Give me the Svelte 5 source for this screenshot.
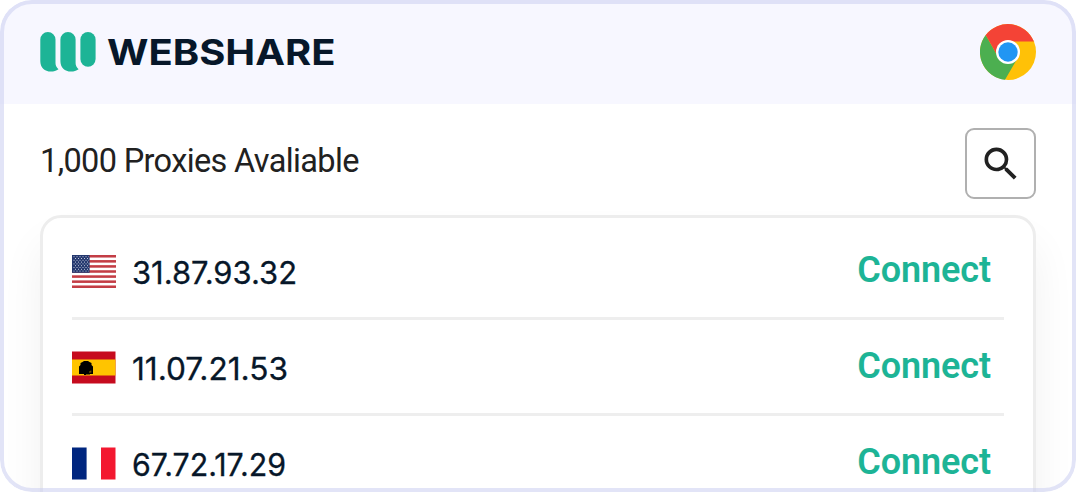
<script lang="ts">
	interface Proxy {
		country: 'us' | 'es' | 'fr';
		ip: string;
		width: number;
	}

	const proxies: Proxy[] = [
		{ country: 'us', ip: '31.87.93.32', width: 165 },
		{ country: 'es', ip: '11.07.21.53', width: 156 },
		{ country: 'fr', ip: '67.72.17.29', width: 154 }
	];

	const stripes = [0, 1, 2, 3, 4, 5, 6];
	const starRows = [0, 1, 2, 3, 4, 5, 6, 7, 8];
</script>

<div class="popup">
	<header class="header">
		<svg class="brand" width="298" height="44" viewBox="0 0 298 44">
			<g fill="#1db496">
				<path d="M.3 7.600a7.600 7.600 0 0 1 15.200 0V31c0 2.600.9 4.200 3 6.300C16.200 38.700 13.700 39.600 11 39.600 4.500 39.600.3 35.500.3 29Z" />
				<path d="M20.400 7.600a7.600 7.600 0 0 1 15.200 0V31c0 2.600.9 4.200 3 6.300-2.300 1.400-4.800 2.300-7.500 2.300-6.500 0-10.700-4.100-10.700-10.600Z" />
				<rect x="40.400" y="0" width="15.200" height="34.700" rx="7.600" />
			</g>
			<text class="brand-name" x="67" y="32.700" textLength="228.500" lengthAdjust="spacingAndGlyphs">WEBSHARE</text>
		</svg>
		<svg width="56" height="56" viewBox="0 0 56 56">
			<circle cx="28" cy="28" r="28" fill="#ffc107" />
			<path fill="#4caf50" d="M5.700 11 17 31 28 28 37.500 34.300 25 55.850A28 28 0 0 1 5.700 11Z" />
			<path fill="#f44336" d="M5.700 11A28 28 0 0 1 53.900 17.600H28V28L16.500 30Z" />
			<circle cx="28" cy="28" r="12" fill="#fff" />
			<circle cx="28" cy="28" r="9.700" fill="#2196f3" />
		</svg>
	</header>

	<div class="toolbar">
		<span class="count">1,000 Proxies Avaliable</span>
		<button class="search" aria-label="Search">
			<svg width="44" height="44" viewBox="0 0 24 24">
				<path fill="#212121" d="M15.500 14h-.79l-.28-.27A6.471 6.471 0 0 0 16 9.500 6.500 6.500 0 1 0 9.500 16c1.610 0 3.090-.59 4.230-1.570l.27.28v.79l5 4.990L20.490 19l-4.990-5zm-6 0C7.010 14 5 11.990 5 9.500S7.010 5 9.500 5 14 7.010 14 9.500 11.990 14 9.500 14z" />
			</svg>
		</button>
	</div>

	<div class="list">
		{#each proxies as proxy}
			<div class="row">
				<svg class="flag" width="44" height="33" viewBox="0 0 44 33">
					{#if proxy.country === 'us'}
						<rect width="44" height="33" fill="#fff" />
						{#each stripes as i}
							<rect y={i * 5.077} width="44" height="2.540" fill="#c33d45" />
						{/each}
						<rect width="17.600" height="17.800" fill="#24386f" />
						{#each starRows as i}
							<path
								d="M{i % 2 ? 3 : 1.5} {1.7 + i * 1.8}H17"
								stroke="#c3c9da"
								stroke-width="1"
								stroke-dasharray="1 2"
							/>
						{/each}
					{:else if proxy.country === 'es'}
						<rect y=".5" width="43.500" height="32" fill="#c60b1e" />
						<rect y="8.500" width="43.500" height="16" fill="#ffc400" />
						<path d="M7 23V15.500L8.500 14V12L10.500 11 12 10h4l1.500 1 2 1v2l1.500 1.500V23H18v.6h-4v.4h-2v-1Z" />
						<path d="M17 20.500h1.500v1H17zm1.500-1h.8v2h-.8z" fill="#8a6a05" />
					{:else}
						<rect y=".5" width="43.500" height="32" fill="#fff" />
						<rect y=".5" width="14.600" height="32" fill="#00267f" />
						<rect x="29" y=".5" width="14.500" height="32" fill="#f31830" />
					{/if}
				</svg>
				<svg class="ip" width="180" height="40" viewBox="0 0 180 40">
					<text x="0" y="32.500" textLength={proxy.width} lengthAdjust="spacingAndGlyphs">{proxy.ip}</text>
				</svg>
				<button class="connect">Connect</button>
			</div>
		{/each}
	</div>
</div>

<style>
	:global(body) {
		background: #fff;
	}

	.popup {
		position: relative;
		box-sizing: border-box;
		width: 1076px;
		height: 492px;
		overflow: hidden;
		border-radius: 32px;
		background: #fff;
		font-family: Roboto, sans-serif;
	}

	/* translucent frame drawn over the content */
	.popup::after {
		content: '';
		position: absolute;
		inset: 0;
		border: 4px solid rgba(205, 208, 242, 0.58);
		border-radius: 32px;
		pointer-events: none;
	}

	.header {
		display: flex;
		align-items: center;
		justify-content: space-between;
		box-sizing: border-box;
		height: 104px;
		padding: 0 40px;
		background: #f7f7ff;
	}

	.brand {
		margin-bottom: -4px;
	}

	.brand-name {
		font-family: Inter, sans-serif;
		font-size: 35.5px;
		font-weight: 700;
		fill: #071729;
	}

	.toolbar {
		display: flex;
		justify-content: space-between;
		height: 88px;
		padding: 24px 40px 0;
	}

	.count {
		padding-top: 15px;
		font-size: 32.5px;
		line-height: 37px;
		letter-spacing: -0.64px;
		color: #212121;
	}

	.search {
		display: flex;
		align-items: center;
		justify-content: center;
		box-sizing: border-box;
		width: 71px;
		height: 71px;
		padding: 0;
		border: 2px solid #b0b0b0;
		border-radius: 9px;
		background: #fff;
	}

	.list {
		box-sizing: border-box;
		width: 996px;
		height: 340px;
		margin: -1px 40px 0;
		padding: 6px 29px;
		border: 3px solid #ededed;
		border-radius: 21px;
		background: #fff;
		box-shadow: 0 28px 44px rgba(0, 0, 0, 0.06);
	}

	.row {
		display: flex;
		align-items: center;
		box-sizing: border-box;
		height: 96px;
		border-bottom: 3px solid #eee;
		padding-top: 1px;
	}

	.flag {
		flex: none;
		margin-right: 16px;
	}

	.ip {
		font-family: Inter, sans-serif;
		font-size: 31px;
		fill: #071729;
		stroke: #071729;
		stroke-width: 0.3px;
	}

	.connect {
		margin: 0 13px 3px auto;
		padding: 0;
		border: 0;
		background: none;
		font-family: Roboto, sans-serif;
		font-size: 36px;
		font-weight: 600;
		line-height: 42px;
		letter-spacing: -0.1px;
		color: #1db496;
	}
</style>
